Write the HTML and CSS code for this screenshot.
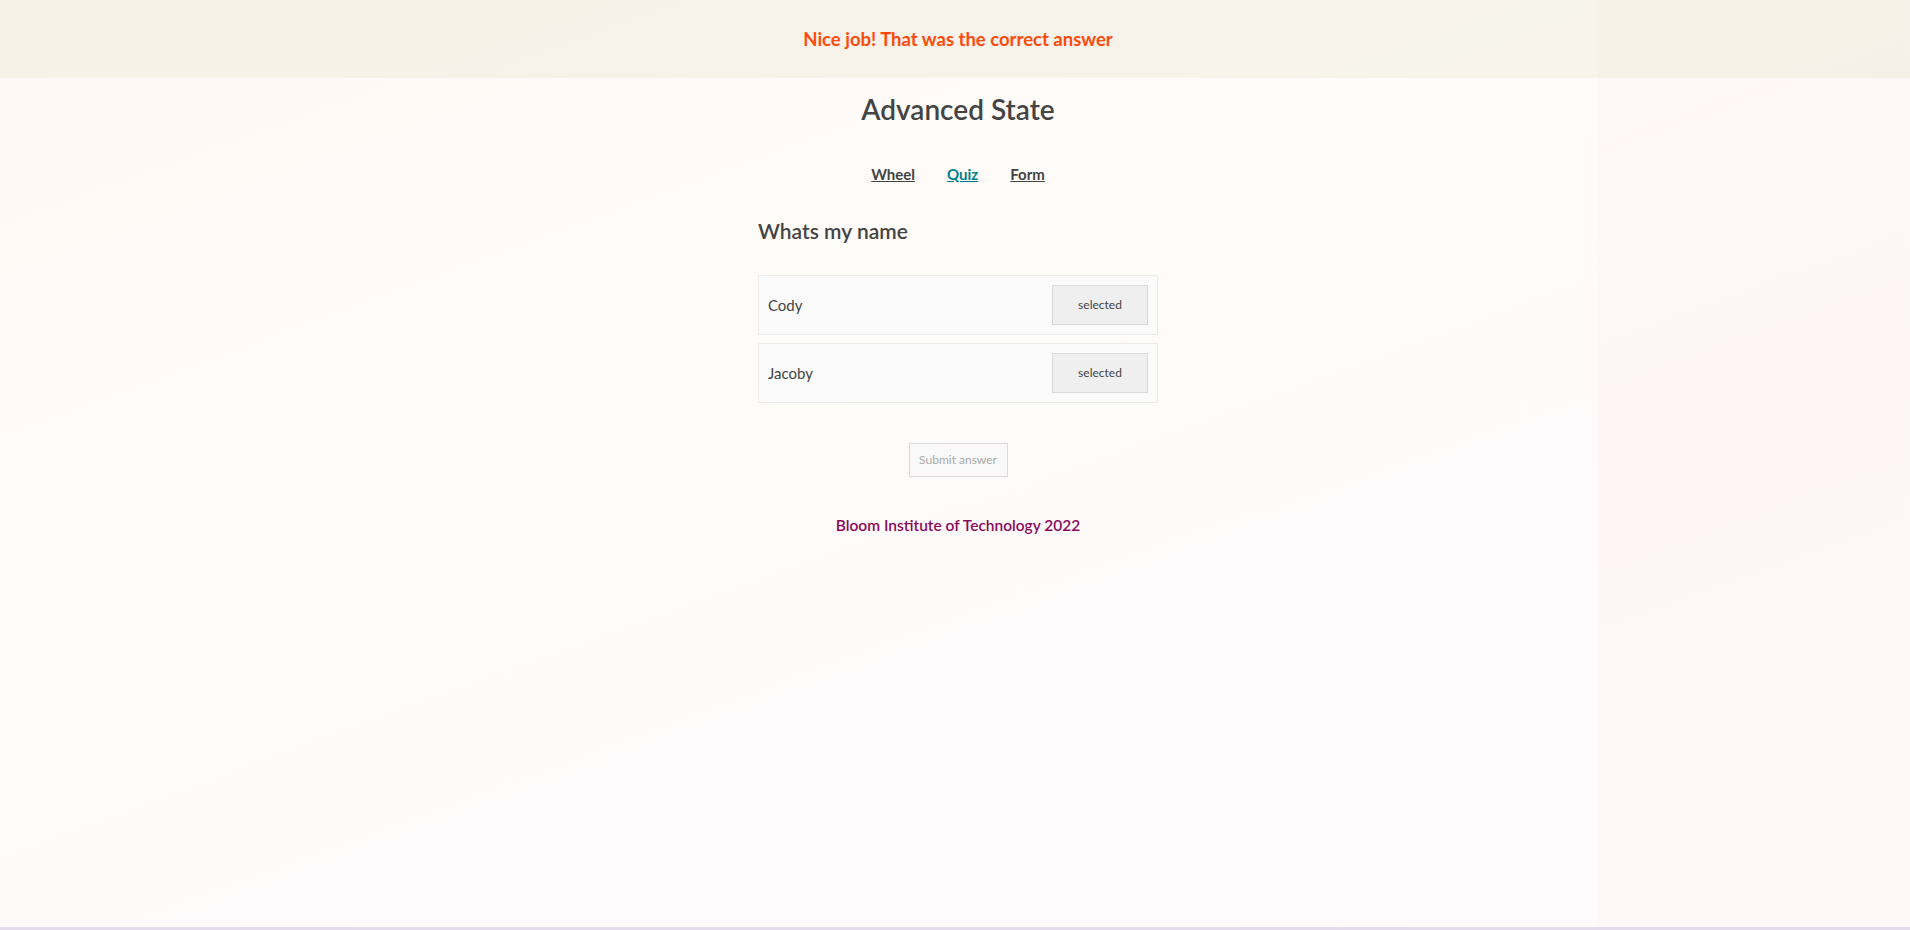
FILE: index.html
```html
<!DOCTYPE html>
<html lang="en">
<head>
<meta charset="utf-8">
<title>Advanced State</title>
<link rel="stylesheet" href="styles.css">
</head>
<body>
<div class="page">
  <div class="banner"><span class="banner-text">Nice job! That was the correct answer</span></div>
  <main class="main">
    <h1 class="title">Advanced State</h1>
    <nav class="nav">
      <a class="nav-link" href="#">Wheel</a>
      <a class="nav-link active" href="#">Quiz</a>
      <a class="nav-link" href="#">Form</a>
    </nav>
    <section class="quiz">
      <h2 class="question">Whats my name</h2>
      <div class="answers">
        <div class="answer">
          <span class="answer-text">Cody</span>
          <button class="select-btn">selected</button>
        </div>
        <div class="answer">
          <span class="answer-text">Jacoby</span>
          <button class="select-btn">selected</button>
        </div>
      </div>
      <div class="submit-row">
        <button class="submit-btn" disabled>Submit answer</button>
      </div>
    </section>
    <footer class="footer">Bloom Institute of Technology 2022</footer>
  </main>
</div>
</body>
</html>
```
FILE: styles.css
```css
html, body {
  margin: 0;
  padding: 0;
  height: 100%;
}
body {
  font-family: Lato, "Open Sans", sans-serif;
  color: #444;
  background:
    linear-gradient(to right, transparent 1598px, rgba(255, 215, 215, 0.15) 1598px),
    linear-gradient(160deg, #fff7f4 0%, #fffcfa 35%, #fffafb 65%, #fffcfd 100%);
}
.page {
  min-height: 927px;
  border-bottom: 3px solid #e4dcec;
  box-sizing: content-box;
}
.banner {
  height: 78px;
  display: flex;
  align-items: center;
  justify-content: center;
  padding-left: 6px;
  background: rgba(236, 232, 212, 0.4);
}
.banner-text {
  color: #ff4a0a;
  font-weight: 700;
  font-size: 18.5px;
  letter-spacing: 0;
}
.main {
  display: flex;
  flex-direction: column;
  align-items: center;
  padding-left: 6px;
}
.title {
  margin: 15px 0 0;
  font-size: 28px;
  font-weight: 600;
  color: #444;
  line-height: 1.2;
}
.nav {
  display: flex;
  gap: 32px;
  margin-top: 38px;
}
.nav-link {
  color: #444;
  font-weight: 700;
  font-size: 15px;
  text-decoration: underline;
}
.nav-link.active {
  color: #00808a;
}
.quiz {
  width: 400px;
  margin-top: 34px;
}
.question {
  margin: 0 0 31px;
  font-size: 21px;
  font-weight: 600;
  color: #444;
  line-height: 1.3;
}
.answers {
  display: flex;
  flex-direction: column;
  gap: 8px;
}
.answer {
  display: flex;
  align-items: center;
  justify-content: space-between;
  padding: 9px;
  border: 1px solid #ececec;
  background: #fbfbfb;
}
.answer-text {
  font-size: 15px;
  color: #444;
}
.select-btn {
  width: 96px;
  height: 40px;
  background: #efefef;
  border: 1px solid #dadada;
  font-family: inherit;
  font-size: 12px;
  color: #444;
}
.submit-row {
  display: flex;
  justify-content: center;
  margin-top: 40px;
}
.submit-btn {
  width: 99px;
  height: 34px;
  background: #f9f9f9;
  border: 1px solid #dcdcdc;
  font-family: inherit;
  font-size: 12px;
  color: #aaa;
}
.footer {
  margin-top: 39px;
  color: #8a0a5c;
  font-size: 15.5px;
  font-weight: 600;
}
```
